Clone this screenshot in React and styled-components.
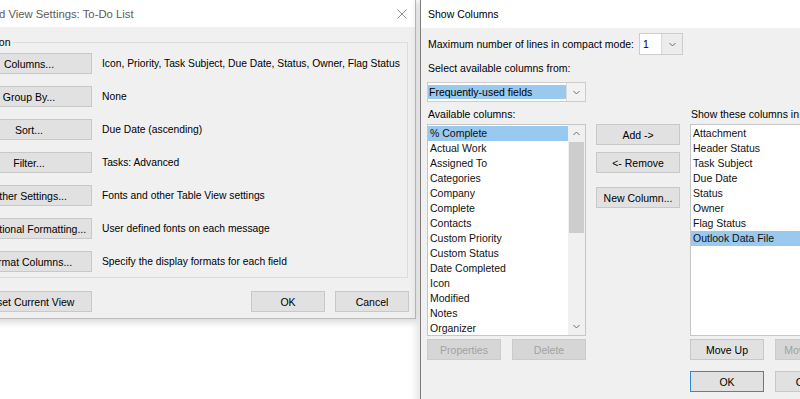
import { createGlobalStyle, styled } from 'styled-components';

const GlobalStyle = createGlobalStyle`
  html, body {
    margin: 0;
    padding: 0;
    background: #fff;
  }
  body {
    font-family: "Liberation Sans", Arial, sans-serif;
    font-size: 10.5px;
    color: #000;
    overflow: hidden;
  }
`;

const Desktop = styled.div`
  width: 800px;
  height: 399px;
  overflow: hidden;
  display: flex;
  align-items: flex-start;
  background: #fff;
`;

const LeftWindow = styled.div`
  flex-shrink: 0;
  width: 476px;
  margin-left: -60px;
  display: flex;
  flex-direction: column;
  border-right: 1px solid #bcbcbc;
  border-bottom: 1px solid #bcbcbc;
  box-shadow: 0 3px 7px rgba(0, 0, 0, 0.16);
  box-sizing: border-box;
`;

const RightWindow = styled.div`
  flex-shrink: 0;
  width: 520px;
  height: 420px;
  margin-left: 4px;
  display: flex;
  flex-direction: column;
  border-left: 1px solid #7d7d7d;
  box-shadow: -3px 0 8px rgba(0, 0, 0, 0.12);
`;

const TitleBar = styled.div`
  height: ${(p) => p.$height}px;
  flex-shrink: 0;
  display: flex;
  align-items: center;
  justify-content: space-between;
  padding: 0 8px 0 ${(p) => p.$padLeft}px;
  background: #fff;
`;

const TitleText = styled.span`
  font-size: ${(p) => p.$size}px;
  color: ${(p) => (p.$inactive ? '#5c5c5c' : '#000')};
  white-space: nowrap;
`;

const CloseIcon = styled.svg`
  display: block;
`;

const LeftBody = styled.div`
  background: #f0f0f0;
  padding: 9px 6px 6px 10px;
  display: flex;
  flex-direction: column;
`;

const GroupBox = styled.fieldset`
  margin: 0 1px 0 0;
  min-width: 0;
  border: 1px solid #dcdcdc;
  padding: 5px 0 5px 15px;
  display: flex;
  flex-direction: column;
  gap: 12px;
`;

const Legend = styled.legend`
  margin-left: -10px;
  padding: 0 2px;
  line-height: 12px;
  font-size: 10.5px;
`;

const OptionRow = styled.div`
  display: flex;
  align-items: center;
  gap: 10px;
`;

const Description = styled.span`
  white-space: nowrap;
  font-size: 10.3px;
`;

const Button = styled.button`
  width: ${(p) => p.$width || 74}px;
  height: 21px;
  flex-shrink: 0;
  padding: 0;
  margin: 0;
  font: inherit;
  white-space: nowrap;
  overflow: hidden;
  color: ${(p) => (p.disabled ? '#a2a2a2' : '#000')};
  background: ${(p) => (p.disabled ? '#d6d6d6' : '#e1e1e1')};
  border: 1px solid ${(p) => (p.$primary ? '#2e89d8' : p.disabled ? '#cbcbcb' : '#c8c8c8')};
  box-sizing: border-box;
`;

const LeftFooter = styled.div`
  display: flex;
  align-items: center;
  gap: 10px;
  margin-top: 13px;
  padding-left: 16px;
`;

const Spacer = styled.div`
  flex: 1;
`;

const RightBody = styled.div`
  flex: 1;
  background: #f0f0f0;
  padding: 5px 0 0 6px;
  display: flex;
  flex-direction: column;
`;

const FieldRow = styled.div`
  display: flex;
  align-items: center;
  height: 22px;
`;

const Label = styled.div`
  line-height: 15px;
  padding-left: 1px;
  white-space: nowrap;
  margin-top: ${(p) => p.$top || 0}px;
  width: ${(p) => (p.$width ? `${p.$width}px` : 'auto')};
  grid-column: ${(p) => p.$col || 'auto'};
`;

const Combo = styled.div`
  display: flex;
  width: ${(p) => p.$width}px;
  height: ${(p) => p.$height}px;
  margin-top: ${(p) => p.$top || 0}px;
  border: 1px solid #cdcdcd;
  background: #fff;
  box-sizing: border-box;
`;

const ComboValue = styled.div`
  flex: 1;
  display: flex;
  align-items: center;
  margin: ${(p) => (p.$selected ? '2px 0 2px 0' : '0')};
  padding-left: ${(p) => (p.$selected ? 1 : 3)}px;
  background: ${(p) => (p.$selected ? '#99c9ef' : 'transparent')};
  white-space: nowrap;
`;

const ComboArrow = styled.div`
  width: ${(p) => p.$width}px;
  display: flex;
  align-items: center;
  justify-content: center;
  background: ${(p) => p.$bg};
  border-left: 1px solid #dadada;
`;

const ColumnsGrid = styled.div`
  display: grid;
  grid-template-columns: 159px 84px 159px;
  column-gap: 10px;
  margin-top: 5px;
`;

const ListBox = styled.div`
  height: 212px;
  margin-top: 2px;
  display: flex;
  border: 1px solid #c6c6c6;
  background: #fff;
  box-sizing: border-box;
  overflow: hidden;
  grid-column: ${(p) => p.$col};
`;

const ListItems = styled.div`
  flex: 1;
  min-width: 0;
  padding-top: 1px;
`;

const Item = styled.div`
  height: 15px;
  line-height: 15px;
  padding-left: 2px;
  white-space: nowrap;
  color: #111;
  background: ${(p) => (p.$selected ? '#99c9ef' : 'transparent')};
`;

const ScrollBar = styled.div`
  width: 17px;
  display: flex;
  flex-direction: column;
  background: #f0f0f0;
`;

const ScrollArrow = styled.div`
  height: 17px;
  display: flex;
  align-items: center;
  justify-content: center;
`;

const ScrollTrack = styled.div`
  flex: 1;
`;

const ScrollThumb = styled.div`
  height: 91px;
  margin: 0 1px;
  background: #cdcdcd;
`;

const MiddleButtons = styled.div`
  display: flex;
  flex-direction: column;
  margin-top: 2px;
  grid-column: 2;

  & > button:nth-child(2) {
    margin-top: 7px;
  }
  & > button:nth-child(3) {
    margin-top: 14px;
  }
`;

const ButtonPair = styled.div`
  display: flex;
  gap: 11px;
  margin-top: ${(p) => p.$top}px;
  grid-column: ${(p) => p.$col};
`;

function Chevron({ up }) {
  return (
    <svg width="7" height="5" viewBox="0 0 7 5">
      <polyline
        points={up ? '0.5,4 3.5,1 6.5,4' : '0.5,1 3.5,4 6.5,1'}
        fill="none"
        stroke="#6e6e6e"
        strokeWidth="1"
      />
    </svg>
  );
}

const options = [
  ['Columns...', 'Icon, Priority, Task Subject, Due Date, Status, Owner, Flag Status'],
  ['Group By...', 'None'],
  ['Sort...', 'Due Date (ascending)'],
  ['Filter...', 'Tasks: Advanced'],
  ['Other Settings...', 'Fonts and other Table View settings'],
  ['Conditional Formatting...', 'User defined fonts on each message'],
  ['Format Columns...', 'Specify the display formats for each field'],
];

const available = [
  '% Complete', 'Actual Work', 'Assigned To', 'Categories', 'Company', 'Complete',
  'Contacts', 'Custom Priority', 'Custom Status', 'Date Completed', 'Icon',
  'Modified', 'Notes', 'Organizer',
];

const shown = [
  'Attachment', 'Header Status', 'Task Subject', 'Due Date', 'Status', 'Owner',
  'Flag Status', 'Outlook Data File',
];

export default function App() {
  return (
    <>
      <GlobalStyle />
      <Desktop>
        <LeftWindow>
          <TitleBar $height={27} $padLeft={15}>
            <TitleText $size={11.3} $inactive>Advanced View Settings: To-Do List</TitleText>
            <CloseIcon width="10" height="10" viewBox="0 0 10 10">
              <path d="M0.5 0.5 L9.5 9.5 M9.5 0.5 L0.5 9.5" stroke="#8c8c8c" strokeWidth="1" />
            </CloseIcon>
          </TitleBar>
          <LeftBody>
            <GroupBox>
              <Legend>Description</Legend>
              {options.map(([label, text]) => (
                <OptionRow key={label}>
                  <Button $width={126}>{label}</Button>
                  <Description>{text}</Description>
                </OptionRow>
              ))}
            </GroupBox>
            <LeftFooter>
              <Button $width={126}>Reset Current View</Button>
              <Spacer />
              <Button>OK</Button>
              <Button>Cancel</Button>
            </LeftFooter>
          </LeftBody>
        </LeftWindow>

        <RightWindow>
          <TitleBar $height={28} $padLeft={7}>
            <TitleText $size={10.5}>Show Columns</TitleText>
          </TitleBar>
          <RightBody>
            <FieldRow>
              <Label $width={211}>Maximum number of lines in compact mode:</Label>
              <Combo $width={44} $height={22}>
                <ComboValue>1</ComboValue>
                <ComboArrow $width={20} $bg="#ececec">
                  <Chevron />
                </ComboArrow>
              </Combo>
            </FieldRow>
            <Label $top={6}>Select available columns from:</Label>
            <Combo $width={159} $height={20} $top={6}>
              <ComboValue $selected>Frequently-used fields</ComboValue>
              <ComboArrow $width={18} $bg="#f2f2f2">
                <Chevron />
              </ComboArrow>
            </Combo>

            <ColumnsGrid>
              <Label $col={1}>Available columns:</Label>
              <Label $col={3}>Show these columns in this order:</Label>

              <ListBox $col={1}>
                <ListItems>
                  {available.map((name, i) => (
                    <Item key={name} $selected={i === 0}>{name}</Item>
                  ))}
                </ListItems>
                <ScrollBar>
                  <ScrollArrow>
                    <Chevron up />
                  </ScrollArrow>
                  <ScrollTrack>
                    <ScrollThumb />
                  </ScrollTrack>
                  <ScrollArrow>
                    <Chevron />
                  </ScrollArrow>
                </ScrollBar>
              </ListBox>
              <MiddleButtons>
                <Button $width={84}>Add -&gt;</Button>
                <Button $width={84}>&lt;- Remove</Button>
                <Button $width={84}>New Column...</Button>
              </MiddleButtons>
              <ListBox $col={3}>
                <ListItems>
                  {shown.map((name, i) => (
                    <Item key={name} $selected={i === shown.length - 1}>{name}</Item>
                  ))}
                </ListItems>
              </ListBox>

              <ButtonPair $col={1} $top={3}>
                <Button disabled>Properties</Button>
                <Button disabled>Delete</Button>
              </ButtonPair>
              <ButtonPair $col={3} $top={3}>
                <Button>Move Up</Button>
                <Button disabled>Move Down</Button>
              </ButtonPair>
              <ButtonPair $col={3} $top={11}>
                <Button $primary>OK</Button>
                <Button>Cancel</Button>
              </ButtonPair>
            </ColumnsGrid>
          </RightBody>
        </RightWindow>
      </Desktop>
    </>
  );
}
